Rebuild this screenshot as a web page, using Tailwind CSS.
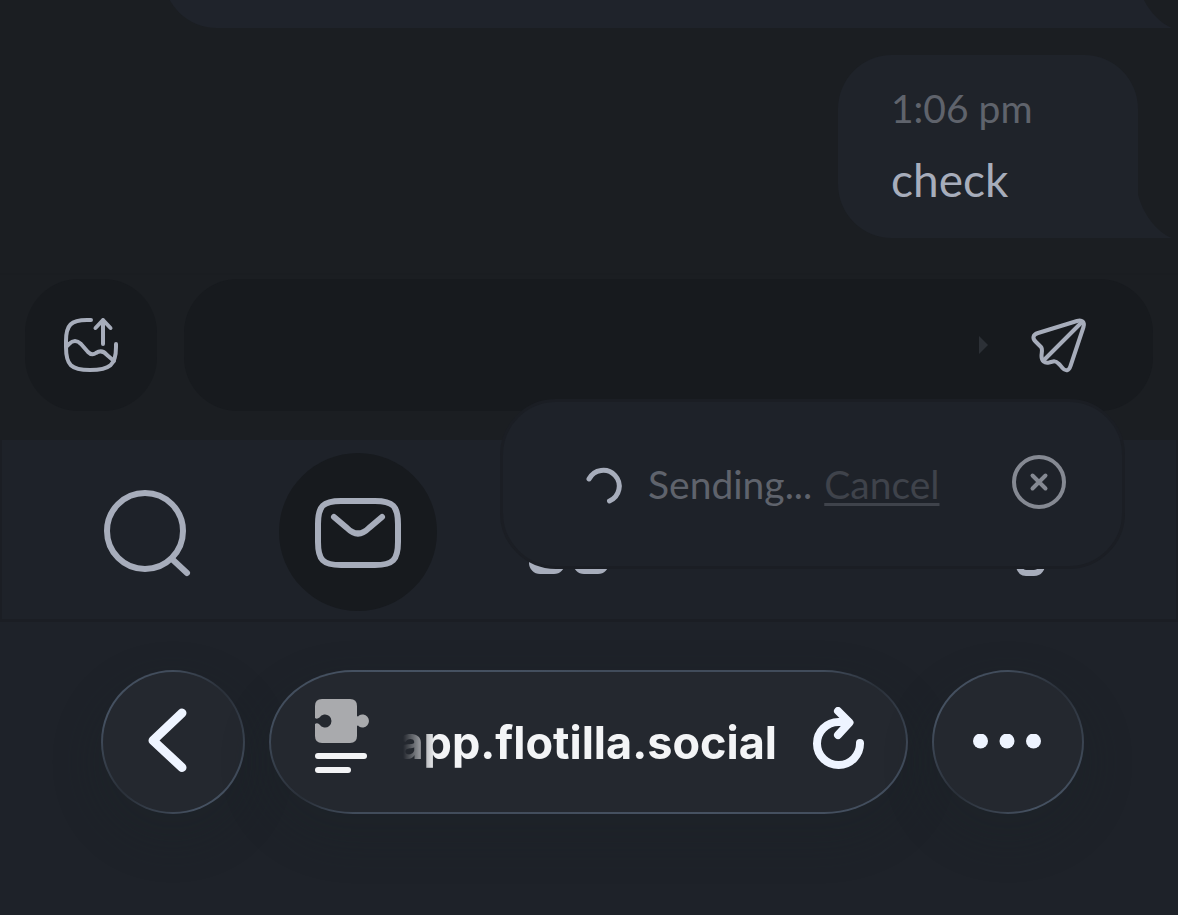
<!DOCTYPE html>
<html lang="en">
<head>
<meta charset="utf-8">
<meta name="viewport" content="width=device-width, initial-scale=1">
<title>Flotilla</title>
<script src="https://cdn.jsdelivr.net/npm/@tailwindcss/browser@4"></script>
</head>
<body class="flex h-screen flex-col overflow-hidden bg-[#1e2229] font-['Lato',sans-serif] text-[#a7adbb]">

  <main class="flex min-h-0 flex-1 flex-col bg-[#1b1e22]">
    <div class="flex min-h-0 flex-1 flex-col items-end justify-end gap-[27px] overflow-hidden pr-10 pl-[163px]">
      <div class="relative h-32 w-full shrink-0 rounded-[54px] rounded-br-none bg-[#1f232b]">
        <svg class="absolute bottom-0 left-full h-11 w-[34px]" viewBox="0 0 34 44" fill="#1f232b" aria-hidden="true"><path d="M0 0C4 18 18 38 34 44H0Z"/></svg>
      </div>
      <div class="relative flex w-[300px] shrink-0 flex-col rounded-[54px] rounded-br-none bg-[#1f232a] px-[53px] pt-[26px] pb-6">
        <time class="text-[39px] leading-[54px] whitespace-nowrap text-[#5f636c]">1:06 pm</time>
        <p class="pt-[10px] text-[46px] leading-[69px]">check</p>
        <svg class="absolute bottom-0 left-full h-11 w-[34px]" viewBox="0 0 34 44" fill="#1f232a" aria-hidden="true"><path d="M0 0C4 18 18 38 34 44H0Z"/></svg>
      </div>
    </div>

    <form class="mt-[35px] flex gap-[27px] border-t-2 border-[#1a1d21] px-[25px] pt-1 pb-[29px]">
      <button type="button" aria-label="Attach image" class="flex size-[132px] shrink-0 items-center justify-center rounded-[54px] bg-[#171a1e]">
        <svg class="size-16" viewBox="0 0 64 64" fill="none" stroke="currentColor" stroke-width="4" stroke-linecap="round" stroke-linejoin="round"><path d="M32 7H28C12 7 7 12 7 28V34C7 52 12 57 31 57C51 57 57 52 57 34V31"/><path d="M8 33L10 31Q16 25 22 31L29 39Q33 43 37 40Q43 36 48 42L55 48"/><path d="M44 31V7M36.500 15L44 7L51.500 15"/></svg>
      </button>
      <div class="flex h-[132px] min-w-0 flex-1 items-center rounded-[54px] bg-[#171a1e] pr-[62px] pl-12">
        <input type="text" aria-label="Message" class="h-full min-w-0 flex-1 bg-transparent text-[46px] outline-none">
        <svg class="mr-[39px] h-[18px] w-[9px]" viewBox="0 0 9 18" fill="#2c3036" aria-hidden="true"><path d="M0 0L9 9L0 18Z"/></svg>
        <button type="submit" aria-label="Send" class="shrink-0">
          <svg class="size-16" viewBox="0 0 64 64" fill="none" stroke="currentColor" stroke-width="4" stroke-linecap="round" stroke-linejoin="round"><path d="M50 8L11 20C6 21.500 5 25 8.500 28.500L14 34C16 36 14.500 40 14.500 43C14.500 48 17.500 50.500 22 49.500L26 48.500C29 47.500 30.500 49.500 33 52L35.500 55C38.500 58.500 42 58 43.500 53L56.500 14C58 9 55 6.500 50 8Z"/><path d="M17 47L55 9"/></svg>
        </button>
      </div>
    </form>
  </main>

  <nav class="relative flex h-[182px] shrink-0 items-center justify-between border-x-2 border-b-3 border-[#1b1e24] bg-[#1e2229] pt-1 pr-[67px] pl-[66px]">
    <div class="flex gap-[53px]">
      <a href="#search" aria-label="Search" class="flex size-[158px] items-center justify-center">
        <svg class="size-24" viewBox="0 0 96 96" fill="none" stroke="currentColor" stroke-width="6" stroke-linecap="round"><circle cx="46" cy="47" r="38"/><path d="M73 75L88 89"/></svg>
      </a>
      <a href="#messages" aria-label="Messages" class="flex size-[158px] items-center justify-center rounded-full bg-[#171a1e]">
        <svg class="size-24" viewBox="0 0 96 96" fill="none" stroke="currentColor" stroke-width="6" stroke-linecap="round" stroke-linejoin="round"><path d="M31 17H65C83 17 88 22 88 40V58C88 76 83 81 65 81H31C13 81 8 76 8 58V40C8 22 13 17 31 17Z"/><path d="M24 33L37 44Q48 55 59 44L72 33"/></svg>
      </a>
      <a href="#spaces" aria-label="Spaces" class="flex size-[158px] items-center justify-center">
        <svg class="size-24" viewBox="0 0 96 96" fill="currentColor"><rect x="8" y="10" width="36" height="36" rx="11"/><rect x="52" y="10" width="36" height="36" rx="11"/><rect x="8" y="54" width="36" height="36" rx="11"/><rect x="52" y="54" width="36" height="36" rx="11"/></svg>
      </a>
    </div>
    <a href="#settings" aria-label="Settings" class="flex size-[158px] items-center justify-center">
      <svg class="size-24" viewBox="0 0 96 96" fill="none" stroke="currentColor" stroke-width="6" stroke-linejoin="round"><circle cx="48" cy="48" r="13"/><path d="M43 8H54Q60 8 60 18L68 22Q77 17 80 22L86 33Q88 38 80 43V53Q88 58 86 63L80 74Q77 79 68 74L61 77Q60 89 52 89H44Q37 89 36 77L28 74Q19 79 16 74L10 63Q8 58 16 53V43Q8 38 10 33L16 22Q19 17 28 22L37 18Q37 8 43 8Z"/></svg>
    </a>

    <div role="status" class="absolute right-[51px] bottom-[50px] flex h-[170px] w-[625px] items-center rounded-[56px] border-3 border-[#1b1e24] bg-[#1e2229] pr-[56px] pl-[81px] text-[39px] leading-[54px]">
      <svg class="mt-1 size-10" viewBox="0 0 40 40" fill="none" stroke="currentColor" stroke-width="5" stroke-linecap="round" aria-hidden="true"><path d="M5 13A16 16 0 1 1 25.500 35"/></svg>
      <span class="pl-6 whitespace-nowrap text-[#5f636c]">Sending...</span>
      <button type="button" class="ml-3 text-[#3f434b] underline decoration-3 underline-offset-4">Cancel</button>
      <button type="button" aria-label="Close" class="mb-1 ml-auto text-[#858992]">
        <svg class="size-[54px]" viewBox="0 0 54 54" fill="none" stroke="currentColor" stroke-width="4" stroke-linecap="round"><circle cx="27" cy="27" r="25"/><path d="M20.500 20.500L33.500 33.500M33.500 20.500L20.500 33.500"/></svg>
      </button>
    </div>
  </nav>

  <footer class="flex h-[293px] shrink-0 items-start gap-6 bg-[#1e2229] pt-12 pr-[94px] pl-[101px] text-[#eef4ff]">
    <div class="size-36 shrink-0 rounded-full bg-[conic-gradient(#414c5b,#2a3039_45deg,#414c5b_110deg,#465262_160deg,#2a3039_225deg,#465262_290deg,#414c5b)] p-[2px] shadow-[0_20px_36px_12px_rgba(28,34,38,0.25)]">
      <button type="button" aria-label="Back" class="flex size-full items-center justify-center rounded-full bg-[#24282f]">
        <svg class="size-20" viewBox="0 0 80 80" fill="none" stroke="currentColor" stroke-width="9" stroke-linecap="round" stroke-linejoin="round"><path d="M49 11L20 38.500L49 65.500"/></svg>
      </button>
    </div>

    <div class="h-36 min-w-0 flex-1 rounded-[84px/72px] bg-[conic-gradient(#414c5b,#414c5b_73deg,#2a3039_79deg,#414c5b_92deg,#465262_120deg,#414c5b_253deg,#2a3039_259deg,#414c5b_272deg,#465262_290deg,#414c5b)] p-[2px] shadow-[0_20px_36px_12px_rgba(28,34,38,0.25)]">
      <div class="flex size-full items-center rounded-[82px/70px] bg-[#24282f] pr-10 pl-11">
        <button type="button" aria-label="Page settings" class="mb-3 shrink-0">
          <svg class="h-[76px] w-[54px]" viewBox="0 0 54 76" aria-hidden="true"><path fill="#a9aaad" d="M7 1H35Q42 1 42 8V18Q43 19 44 17.500A6.500 6.500 0 1 1 44 28.500Q43 27 42 28V38Q42 45 35 45H7Q0 45 0 38V26Q2 24.500 4.500 26.500A6.500 6.500 0 1 0 4.500 19.500Q2 21.500 0 20V8Q0 1 7 1Z"/><rect y="55" width="52" height="6" rx="3" fill="#f3f4f6"/><rect y="69" width="36" height="6" rx="3" fill="#f3f4f6"/></svg>
        </button>
        <div class="ml-6 flex min-w-0 flex-1 justify-end overflow-hidden pt-[2px] font-['Inter',sans-serif] text-[45px] leading-[60px] font-bold whitespace-nowrap text-[#f3f4f6] mask-[linear-gradient(to_right,transparent_10px,black_42px)]">app.flotilla.social</div>
        <button type="button" aria-label="Reload" class="mb-[6px] ml-[33px] shrink-0">
          <svg class="h-16 w-14" viewBox="0 0 56 64" fill="none" stroke="currentColor" stroke-width="8" stroke-linecap="round" stroke-linejoin="round"><path d="M50 36A21.500 21.500 0 1 1 28.500 15H38"/><path d="M28 4L39.500 15.500L28 28"/></svg>
        </button>
      </div>
    </div>

    <div class="h-36 w-[152px] shrink-0 rounded-[76px/72px] bg-[conic-gradient(#414c5b,#2a3039_45deg,#414c5b_110deg,#465262_160deg,#2a3039_225deg,#465262_290deg,#414c5b)] p-[2px] shadow-[0_20px_36px_12px_rgba(28,34,38,0.25)]">
      <button type="button" aria-label="More" class="flex size-full items-center justify-center rounded-[74px/70px] bg-[#24282f]">
        <svg class="h-4 w-[70px]" viewBox="0 0 70 16" fill="currentColor"><circle cx="7.500" cy="7" r="7.500"/><circle cx="34" cy="7" r="7.500"/><circle cx="60.500" cy="7" r="7.500"/></svg>
      </button>
    </div>
  </footer>
</body>
</html>
